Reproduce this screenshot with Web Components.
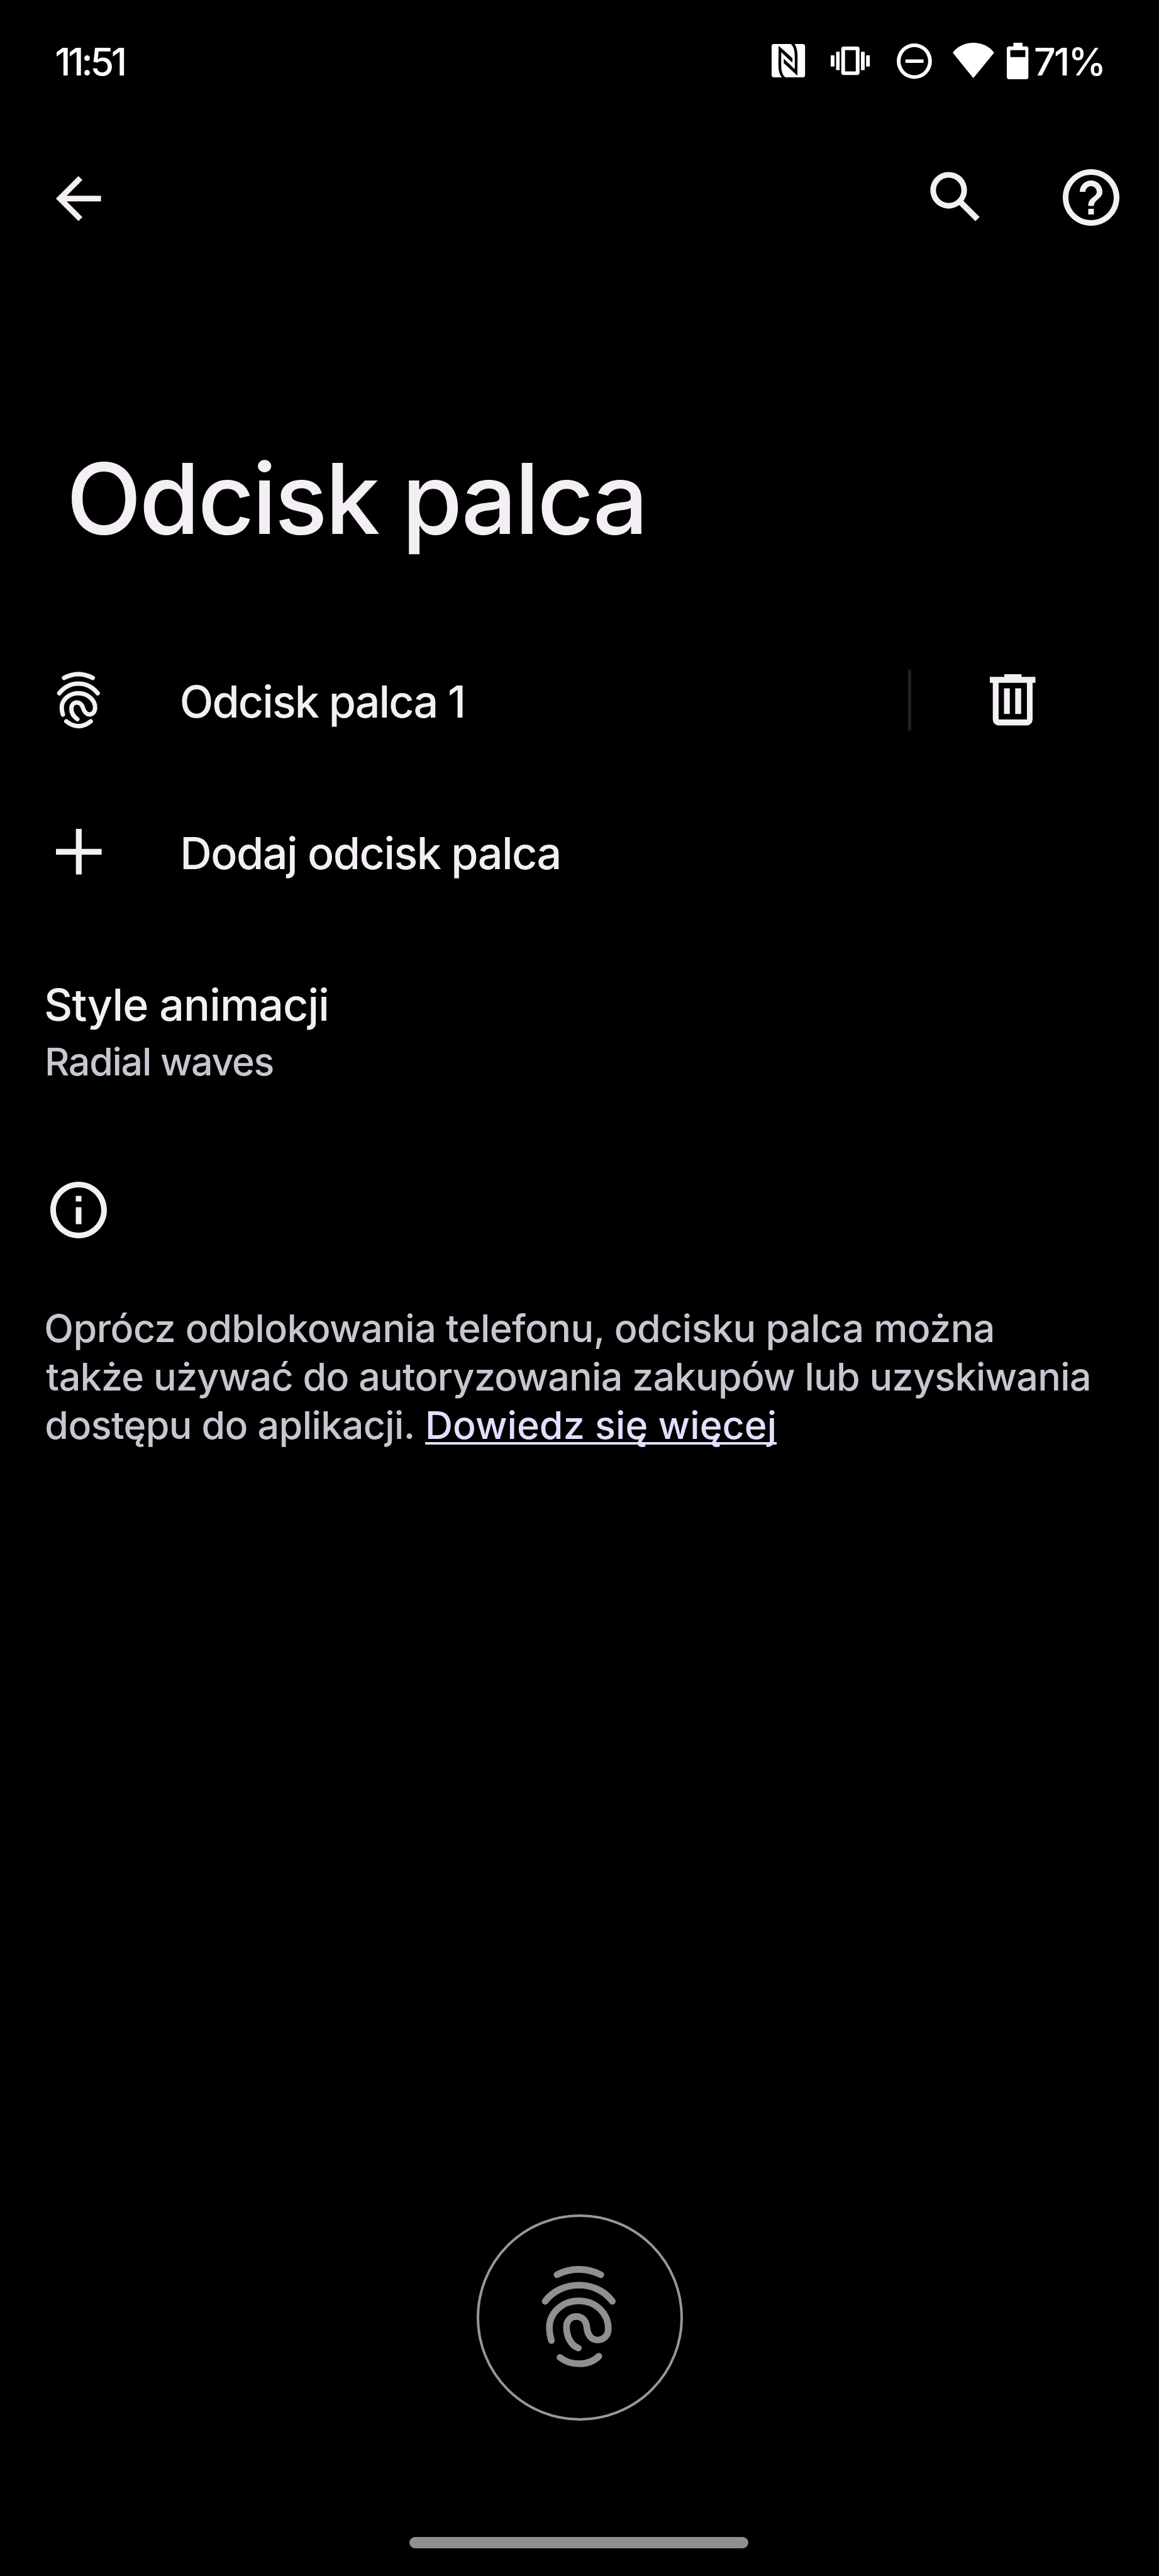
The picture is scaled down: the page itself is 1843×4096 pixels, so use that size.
<!DOCTYPE html>
<html lang="pl">
<head>
<meta charset="utf-8">
<title>Odcisk palca</title>
<style>
html,body{margin:0;background:#000}
body{width:1843px;height:4096px;overflow:hidden;font-family:Inter,"Noto Sans",sans-serif;color:#f3eff4}
</style>
</head>
<body>
<settings-screen></settings-screen>
<script>
const ctx = document.createElement('canvas').getContext('2d');

/* A single line of text tracked so that its ink spans exactly `w` pixels. */
class FitText extends HTMLElement {
  connectedCallback() {
    const root = this.attachShadow({mode: 'open'});
    const size = +this.getAttribute('size'), w = +this.getAttribute('w');
    const weight = this.getAttribute('weight') || 500;
    const lh = this.getAttribute('lh') || size * 1.2;
    const text = this.textContent;
    ctx.font = `${weight} ${size}px Inter, "Noto Sans", sans-serif`;
    const m = ctx.measureText(text);
    const left = -m.actualBoundingBoxLeft;
    const ink = m.actualBoundingBoxRight - left;
    const track = (w - ink) / (text.length - 1);
    const line = this.hasAttribute('underline')
      ? 'text-decoration:underline;text-decoration-thickness:3.6px;text-underline-offset:5px;text-decoration-skip-ink:none;' : '';
    root.innerHTML = `<style>
      :host{display:block;flex:none;white-space:pre;width:${w}px;font-size:${size}px;font-weight:${weight};line-height:${lh}px}
      span{display:block;width:max-content;margin-left:${-left}px;letter-spacing:${track}px;${line}}
      </style><span><slot></slot></span>`;
  }
}
customElements.define('fit-text', FitText);

const PRINT_SMALL = `<g fill="none" stroke="currentColor" stroke-width="7" stroke-linecap="round">
  ${['M199 138Q310 88 422 138', 'M162 238C240 154 380 154 460 238',
     'M190 378C182 355 181 340 181 332C181 280 240 238 310 238C385 238 440 285 440 332C440 358 422 377 397 377C370 377 355 358 346 335C338 312 322 299 298 299C274 299 256 316 256 340C256 366 275 392 302 408',
     'M216 422Q310 486 406 422'].map(d => `<path vector-effect="non-scaling-stroke" d="${d}"/>`).join('')}</g>`;

/* name: [viewBox, width, height, markup] */
const ICONS = {
  back: ['0 0 24 24', 107.5, 107.5, '<path d="M20 11H7.83l5.59-5.59L12 4l-8 8 8 8 1.41-1.41L7.83 13H20v-2z"/>'],
  search: ['0 0 24 24', 107.5, 107.5, '<path d="M20.49 19l-5.73-5.73C15.53 12.2 16 10.91 16 9.5 16 5.91 13.09 3 9.5 3S3 5.91 3 9.5 5.91 16 9.5 16c1.41 0 2.7-.47 3.77-1.24L19 20.49 20.49 19zM5 9.5C5 7.01 7.01 5 9.5 5S14 7.01 14 9.5 11.99 14 9.5 14 5 11.99 5 9.5z"/>'],
  help: ['0 0 24 24', 108, 108, '<path d="M11 18h2v-2h-2v2zm1-16C6.48 2 2 6.48 2 12s4.48 10 10 10 10-4.48 10-10S17.52 2 12 2zm0 18c-4.41 0-8-3.59-8-8s3.59-8 8-8 8 3.59 8 8-3.59 8-8 8zm0-14c-2.21 0-4 1.79-4 4h2c0-1.1.9-2 2-2s2 .9 2 2c0 2-3 1.75-3 5h2c0-2.25 3-2.5 3-5 0-2.21-1.79-4-4-4z"/>'],
  info: ['0 0 24 24', 108, 108, '<path d="M11 7h2v2h-2zm0 4h2v6h-2zm1-9C6.48 2 2 6.48 2 12s4.48 10 10 10 10-4.48 10-10S17.52 2 12 2zm0 18c-4.41 0-8-3.59-8-8s3.59-8 8-8 8 3.59 8 8-3.59 8-8 8z"/>'],
  plus: ['0 0 72.6 72.6', 72.6, 72.6, '<path d="M31.7 0h9.2v31.7h31.7v9.2H40.9v31.7h-9.2V40.9H0v-9.2h31.7z"/>'],
  trash: ['788 199 354 398', 72.5, 81.5, '<path fill-rule="evenodd" d="M900 199H1034V220H1142V266H1120V551A46 46 0 0 1 1074 597H857A46 46 0 0 1 811 551V266H788V220H900ZM856 266H1076V550H856ZM898 309V508H943V309ZM985 309V508H1031V309Z"/>'],
  print: ['146 97 329 372', 67.4, 90.3, PRINT_SMALL],
  sensor: ['530 437 498 684', 117.1, 160.8, `<g fill="none" stroke="currentColor" stroke-width="45" stroke-linecap="round">
    <path d="M631 496C725 448 831 448 927 496"/><path d="M551 676C660 530 898 530 1005 676"/>
    <path d="M593 941C583 910 579 885 579 855C579 755 665 673 779 673C890 673 978 755 978 862C978 905 947 938 906 938C862 938 838 905 832 850C828 805 800 779 760 779C720 779 695 810 695 850C695 920 730 978 775 992"/>
    <path d="M651 1056C720 1112 845 1116 914 1048"/></g>`],
  nfc: ['78 102 143 259', 53.2, 53, '<path d="M88 102H160C172 118 177 153 177 201V298L130 216V251L188 347L189 201C189 153 184 123 176 102H211Q221 102 221 120V343Q221 361 211 361H137C124 345 119 310 119 262V165L167 247V212L108 116L107 262C107 310 112 340 122 361H88Q78 361 78 343V120Q78 102 88 102Z"/>'],
  vibrate: ['330 122 167 221', 62.2, 45.3, '<path fill-rule="evenodd" d="M385 122H443Q453 122 453 140V325Q453 343 443 343H385Q375 343 375 325V140Q375 122 385 122ZM391 150V315H437V150ZM330 190H346V277H330ZM353 162H368V305H353ZM459 162H475V305H459ZM481 190H497V277H481Z"/>'],
  dnd: ['611 98 150 276', 55.9, 56.5, '<path fill-rule="evenodd" d="M611 236A75 138 0 0 1 761 236A75 138 0 0 1 611 236ZM627 236A59 110 0 0 0 745 236A59 110 0 0 0 627 236ZM648 223H725V250H648Z"/>'],
  wifi: ['850 91 177 275', 65.9, 56.3, '<path d="M938 91C905 91 872 115 850 168L938 366L1027 168C1005 115 972 91 938 91Z"/>'],
  battery: ['1082 91 92 283', 34.3, 57.9, '<path fill-rule="evenodd" d="M1110 91H1149V119H1164Q1174 119 1174 137V356Q1174 374 1164 374H1092Q1082 374 1082 356V137Q1082 119 1092 119H1110ZM1097 148V202H1161V148Z"/>'],
};
class UiIcon extends HTMLElement {
  connectedCallback() {
    const [vb, w, h, body] = ICONS[this.getAttribute('name')];
    this.attachShadow({mode: 'open'}).innerHTML = `<style>
      :host{display:block;flex:none;width:${w}px;height:${h}px}
      svg{display:block;overflow:visible}</style>
      <svg width="${w}" height="${h}" viewBox="${vb}" preserveAspectRatio="none" fill="currentColor">${body}</svg>`;
  }
}
customElements.define('ui-icon', UiIcon);

const define = (name, html) => customElements.define(name, class extends HTMLElement {
  constructor() { super(); this.attachShadow({mode: 'open'}).innerHTML = html; }
});

define('status-bar', `<style>
  :host{display:flex;flex:none;align-items:center;height:60px;margin-top:66.7px;padding:0 89.5px 0 89.3px;color:#fff}
  .sp{flex:1}
  .txt{margin-top:2.6px}
  </style>
  <fit-text class="txt" size="61" w="108.5" lh="60">11:51</fit-text><div class="sp"></div>
  <ui-icon name="nfc"></ui-icon>
  <ui-icon name="vibrate" style="margin-left:40.7px"></ui-icon>
  <ui-icon name="dnd" style="margin:1px 0 0 42.2px"></ui-icon>
  <ui-icon name="wifi" style="margin:-1.5px 0 0 33.1px"></ui-icon>
  <ui-icon name="battery" style="margin-left:20.3px"></ui-icon>
  <fit-text class="txt" size="61" w="107.5" lh="60" style="margin-left:10.8px">71%</fit-text>`);

define('tool-bar', `<style>
  :host{display:flex;flex:none;align-items:center;height:107.5px;margin-top:133.8px;padding:0 53.8px 0 71.4px}
  .sp{flex:1}
  </style>
  <ui-icon name="back" style="margin-top:3.6px"></ui-icon><div class="sp"></div>
  <ui-icon name="search"></ui-icon>
  <ui-icon name="help" style="margin-left:107.5px"></ui-icon>`);

define('list-row', `<style>
  :host{display:flex;flex:none;align-items:center;height:100px}
  .lead{display:flex;justify-content:center;width:250px}
  .label{flex:1}
  </style>
  <div class="lead"><slot name="icon"></slot></div>
  <div class="label"><slot></slot></div>
  <slot name="end"></slot>`);

define('sensor-target', `<style>
  :host{display:flex;flex:none;align-items:center;justify-content:center;align-self:center;box-sizing:border-box;
    width:328px;height:328px;border:4px solid #989898;border-radius:50%;color:#909090}
  ui-icon{margin:-2px 0 0 -1.8px}
  </style><ui-icon name="sensor"></ui-icon>`);

define('settings-screen', `<style>
  :host{display:flex;flex-direction:column;width:1843px;height:4096px;background:#000;overflow:hidden}
  .title{margin:330px 0 0 113.4px}
  .divider{width:5px;height:97px;background:#1f1f1f;margin-right:125.3px}
  .trash{margin-right:196.3px}
  .pref{margin:151.7px 0 0 73.1px}
  .sub{margin:10.2px 0 0 1.8px;color:#cac5d0}
  .info{margin:144.2px 0 0 71px}
  .para{flex:none;margin:96.4px 0 0 73.3px;color:#cac5d0}
  .last{display:flex}
  .link{margin-left:24.2px;color:#e3dfff}
  sensor-target{margin-top:1216px}
  .nav{flex:none;align-self:center;width:538.3px;height:17.8px;border-radius:9px;background:#8f8f8f;margin:185.4px 1.8px 0 0}
  </style>
  <status-bar></status-bar>
  <tool-bar></tool-bar>
  <fit-text class="title" size="156" w="907" lh="190">Odcisk palca</fit-text>
  <list-row style="margin-top:175.2px">
    <ui-icon slot="icon" name="print"></ui-icon>
    <fit-text size="70" w="447.3" lh="84" style="margin:6px 0 0 38.7px">Odcisk palca 1</fit-text>
    <div slot="end" class="divider"></div>
    <ui-icon slot="end" class="trash" name="trash"></ui-icon>
  </list-row>
  <list-row style="margin-top:140.7px">
    <ui-icon slot="icon" name="plus"></ui-icon>
    <fit-text size="70" w="597.3" lh="84" style="margin:7.2px 0 0 41.3px">Dodaj odcisk palca</fit-text>
  </list-row>
  <div class="pref">
    <fit-text size="70" w="447.2" lh="84">Style animacji</fit-text>
    <fit-text class="sub" size="61" w="359.7" lh="76">Radial waves</fit-text>
  </div>
  <ui-icon class="info" name="info"></ui-icon>
  <div class="para">
    <fit-text size="61" w="1506.2" lh="76.8">Oprócz odblokowania telefonu, odcisku palca można</fit-text>
    <fit-text size="61" w="1658.6" lh="76.8">także używać do autoryzowania zakupów lub uzyskiwania</fit-text>
    <div class="last">
      <fit-text size="61" w="582.5" lh="76.8">dostępu do aplikacji.</fit-text>
      <fit-text class="link" underline size="61" w="551.7" lh="76.8">Dowiedz się więcej</fit-text>
    </div>
  </div>
  <sensor-target></sensor-target>
  <div class="nav"></div>`);
</script>
</body>
</html>
